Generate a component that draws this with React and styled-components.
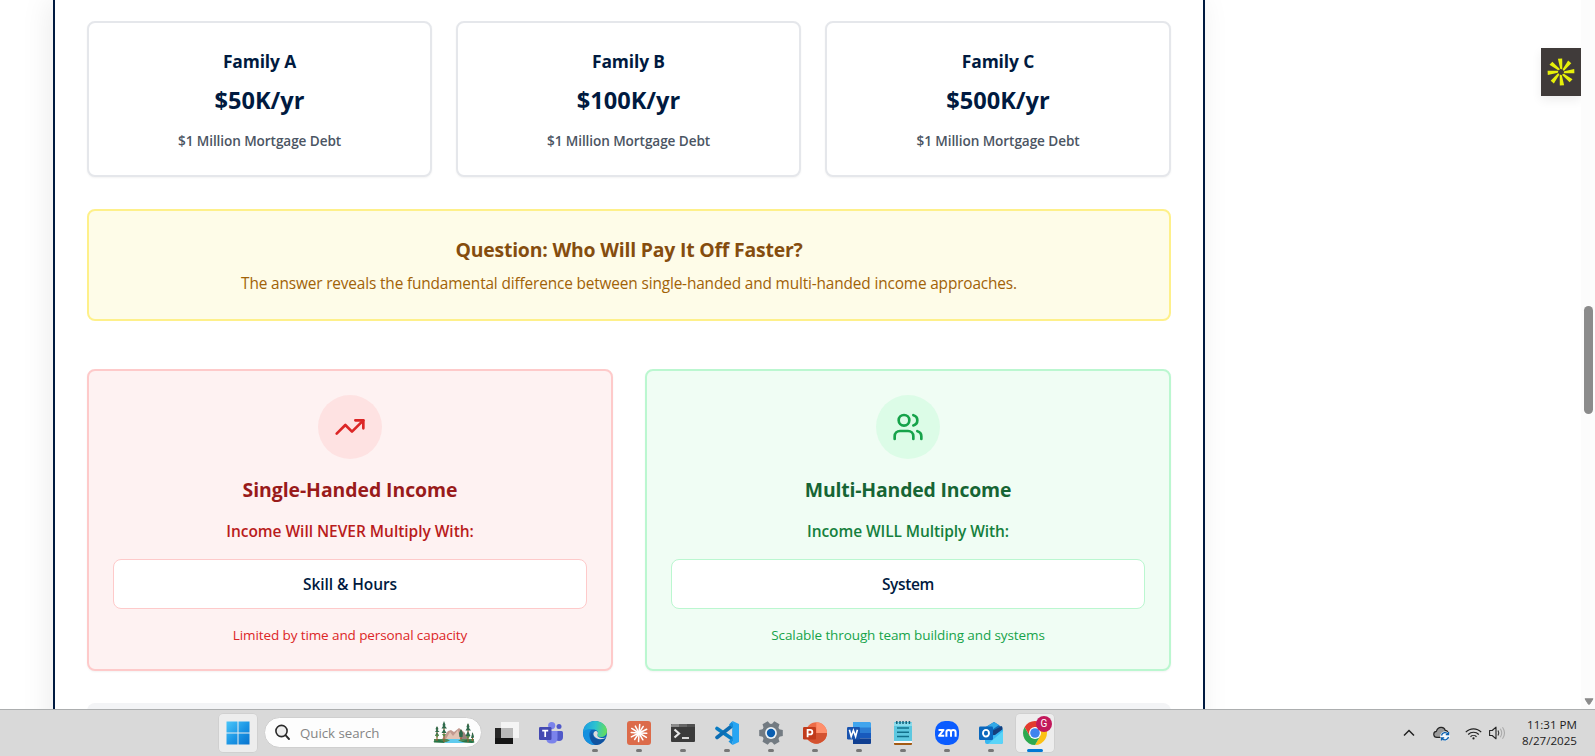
import React from "react";
import styled, { createGlobalStyle } from "styled-components";
import { TrendingUp, Users } from "lucide-react";

const GlobalStyle = createGlobalStyle`
  *, *::before, *::after { box-sizing: border-box; }
  body { margin: 0; overflow: hidden; background: #fff; font-family: "Segoe UI", "Open Sans", "Noto Sans", sans-serif; }
  h3, h4, p { margin: 0; }
  svg { display: block; }
`;

const tones = {
  red: { bg: "#fef2f2", border: "#fecaca", disc: "#fee2e2", icon: "#dc2626", title: "#991b1b", sub: "#b91c1c", note: "#dc2626" },
  green: { bg: "#f0fdf4", border: "#bbf7d0", disc: "#dcfce7", icon: "#16a34a", title: "#166534", sub: "#15803d", note: "#16a34a" },
};

const Screen = styled.div`
  height: 756px;
  display: flex;
  flex-direction: column;
`;

const Viewport = styled.div`
  height: 709px;
  display: flex;
  overflow: hidden;
`;

const Page = styled.main`
  flex: 1;
  position: relative;
  overflow: hidden;
  padding-left: 53px;
`;

const Sheet = styled.section`
  width: 1152px;
  height: 900px;
  padding: 21px 32px 0;
  border: solid #001a40;
  border-width: 0 2px;
  background: #fff;
  box-shadow: -4px 0 28px rgba(0, 0, 0, 0.08);
`;

const Families = styled.div`
  display: grid;
  grid-template-columns: 345px 345px 1fr;
  gap: 24px;
  margin-bottom: 32px;
`;

const FamilyCard = styled.article`
  height: 156px;
  padding: 24px;
  border: 2px solid #e5e7eb;
  border-radius: 8px;
  background: #fff;
  box-shadow: 0 1px 2px rgba(0, 0, 0, 0.05);
  text-align: center;
`;

const FamilyName = styled.h4`
  margin-bottom: 9px;
  font-size: 17.4px;
  line-height: 28px;
  font-weight: 700;
  letter-spacing: -0.12px;
  color: #001a40;
`;

const Income = styled.p`
  margin-bottom: 15px;
  font-size: 23.6px;
  line-height: 32px;
  font-weight: 700;
  color: #001a40;
`;

const Debt = styled.p`
  font-size: 13.6px;
  line-height: 20px;
  font-weight: 600;
  letter-spacing: -0.09px;
  color: #4b5563;
`;

const Question = styled.div`
  height: 112px;
  margin-bottom: 48px;
  padding: 25px 24px 23px;
  border: 2px solid #fef08a;
  border-radius: 8px;
  background: #fefce8;
  text-align: center;
`;

const QuestionTitle = styled.h3`
  margin-bottom: 8px;
  font-size: 19.4px;
  line-height: 28px;
  font-weight: 700;
  letter-spacing: -0.19px;
  color: #854d0e;
`;

const QuestionText = styled.p`
  font-size: 15.4px;
  line-height: 24px;
  letter-spacing: -0.15px;
  color: #a16207;
`;

const Comparison = styled.div`
  display: grid;
  grid-template-columns: repeat(2, 1fr);
  gap: 32px;
  margin-bottom: 32px;
`;

const Panel = styled.article`
  height: 302px;
  padding: 24px;
  border: 2px solid ${(p) => tones[p.$tone].border};
  border-radius: 8px;
  background: ${(p) => tones[p.$tone].bg};
  box-shadow: 0 1px 2px rgba(0, 0, 0, 0.05);
  text-align: center;
`;

const IconDisc = styled.div`
  display: flex;
  align-items: center;
  justify-content: center;
  width: 64px;
  height: 64px;
  margin: 0 auto 17px;
  border-radius: 50%;
  background: ${(p) => tones[p.$tone].disc};
  color: ${(p) => tones[p.$tone].icon};
`;

const PanelTitle = styled.h3`
  margin-bottom: 15px;
  font-size: 19.4px;
  line-height: 28px;
  font-weight: 700;
  letter-spacing: ${(p) => p.$tracking || 0}px;
  color: ${(p) => tones[p.$tone].title};
`;

const PanelSub = styled.p`
  margin-bottom: 16px;
  font-size: 15.5px;
  line-height: 24px;
  font-weight: 600;
  letter-spacing: ${(p) => p.$tracking || 0}px;
  color: ${(p) => tones[p.$tone].sub};
`;

const Factor = styled.div`
  height: 50px;
  margin-bottom: 16px;
  padding: 12px;
  border: 1px solid ${(p) => tones[p.$tone].border};
  border-radius: 8px;
  background: #fff;
  font-size: 15.5px;
  line-height: 24px;
  font-weight: 600;
  letter-spacing: ${(p) => p.$tracking || 0}px;
  color: #001a40;
`;

const PanelNote = styled.p`
  font-size: 13.5px;
  line-height: 20px;
  letter-spacing: -0.1px;
  color: ${(p) => tones[p.$tone].note};
`;

const NextBlock = styled.div`
  height: 160px;
  border-radius: 8px;
  background: #f3f4f6;
`;

const SideWidget = styled.div`
  position: absolute;
  top: 48px;
  right: 0;
  display: flex;
  align-items: center;
  justify-content: center;
  width: 40px;
  height: 48px;
  background: #403b3a;
  box-shadow: 0 4px 10px rgba(0, 0, 0, 0.07);
`;

const Scrollbar = styled.div`
  display: flex;
  flex-direction: column;
  justify-content: space-between;
  align-items: flex-start;
  width: 14px;
  padding: 306px 0 4px 3px;
  background: #fcfcfc;
`;

const Thumb = styled.div`
  width: 9px;
  height: 108px;
  border-radius: 5px;
  background: #8b8b8b;
`;

const Taskbar = styled.footer`
  display: flex;
  align-items: flex-start;
  height: 47px;
  padding: 4px 18px 0 219px;
  border-top: 1px solid #acaeaf;
  background: #d9d9d9;
`;

const Tile = styled.div`
  display: flex;
  align-items: center;
  justify-content: center;
  width: 38px;
  height: 38px;
  border-radius: 4px;
  background: #ededed;
  box-shadow: 0 0 0 0.5px #c8c8c8;
`;

const SearchBox = styled.div`
  display: flex;
  align-items: center;
  width: 218px;
  height: 31px;
  margin: 3px 3px 0 7px;
  padding: 0 6px 0 9px;
  border: 1px solid #cfcfcf;
  border-radius: 16px;
  background: #fdfdfd;
`;

const SearchLabel = styled.span`
  flex: 1;
  margin-left: 9px;
  font-size: 13.3px;
  letter-spacing: -0.04px;
  color: #858585;
`;

const Slot = styled.div`
  position: relative;
  display: flex;
  align-items: center;
  justify-content: center;
  width: 44px;
  height: 38px;

  &::after {
    content: "";
    position: absolute;
    bottom: 0;
    width: ${(p) => (p.$state === "active" ? 16 : 6)}px;
    height: 3px;
    border-radius: 2px;
    background: ${(p) => (p.$state === "active" ? "#0078d4" : "#777")};
    display: ${(p) => (p.$state ? "block" : "none")};
  }
`;

const Badge = styled.span`
  position: absolute;
  top: 2px;
  right: 5px;
  width: 16px;
  height: 16px;
  border-radius: 50%;
  background: #c2185b;
  color: #fff;
  font: 10px/16px Roboto, sans-serif;
  text-align: center;
`;

const Tray = styled.div`
  display: flex;
  align-items: center;
  height: 38px;
  margin-left: auto;
`;

const TrayIcon = styled.div`
  margin-right: ${(p) => p.$gap}px;
`;

const Clock = styled.div`
  width: 60px;
  text-align: right;
  white-space: nowrap;
  font-size: 11.6px;
  line-height: 16px;
  color: #1c1c1c;
`;

const RAYS = [0, 45, 90, 135, 180, 225, 270, 315];

const BurstIcon = () => (
  <svg width="28" height="28" viewBox="-14 -14 28 28" fill="#e6f00a">
    {RAYS.map((a) => (
      <path key={a} d="M-3.1 -13.2 L1.2 -13.4 L1.3 -2.6 L-0.8 -3.2 Z" transform={`rotate(${a})`} />
    ))}
  </svg>
);

const StartIcon = () => (
  <svg width="24" height="24" viewBox="0 0 24 24">
    <defs>
      <linearGradient id="win" x1="0" y1="0" x2="24" y2="24" gradientUnits="userSpaceOnUse">
        <stop offset="0" stopColor="#4cc8fa" />
        <stop offset="0.55" stopColor="#1a94e4" />
        <stop offset="1" stopColor="#0871cc" />
      </linearGradient>
    </defs>
    <path fill="url(#win)" d="M.5.5h11v11H.5zM12.500.5h11v11h-11zM.5 12.500h11v11H.5zM12.500 12.500h11v11h-11z" />
  </svg>
);

const SearchIcon = () => (
  <svg width="17" height="17" viewBox="0 0 17 17" fill="none" stroke="#2a2a2a" strokeLinecap="round">
    <circle cx="7.500" cy="7" r="5.600" strokeWidth="1.600" fill="#eee" />
    <path d="M11.500 11.200l3.500 3.800" strokeWidth="1.900" />
  </svg>
);

const Scenery = () => (
  <svg width="42" height="24" viewBox="0 0 42 24">
    <path fill="#c39a90" d="M9 18 15 10l3-1 3 2 5-4 5 4 4 7z" />
    <path fill="#e2c4b5" d="M13 18l4-7 3 4 5-6 2 9z" />
    <path fill="#9a817b" d="M27 18l4-7 4 7z" />
    <path fill="#4f8a58" d="M1 18h40v3.500H1z" />
    <path fill="#257447" d="M0 21l5-2.500 5 1.500 2 2zM28 21l6-2.500 8 2.500-3 1z" />
    <path fill="#5fcbee" d="M14 18h15l-4 1.500 7 2.500H11l6-2.500z" />
    <path stroke="#9a5c2e" strokeWidth="1.100" d="M4 6v14M11 3v18M28 9v10M35 3v18M39.500 12v8" />
    <path fill="#2f6a4b" d="M4 5l1.500 3L4.500 9l2 2H2l1.500-2-1-1zM4 11l2 4H2zM11 0l1.500 4-.5 1 2 2.500H8.500L10 5l-.5-1zM11 8l2.500 4h-5zM28 8l2 4-.5 4h-3L26 12zM35 2l1.500 3.500L36 7l2 2.500h-5.500L34 7l-.5-1.500zM35 10l2.500 5h-5zM39.500 11l1.500 4.500-.5 1.500H38z" />
    <path fill="#5b8b45" d="M2.500 13.500h3.500L4 17zM9 13h4l-2 3zM33 15h4l-2 3z" />
  </svg>
);

const TaskViewIcon = () => (
  <svg width="24" height="24" viewBox="0 0 24 24">
    <path fill="#272727" d="M0 7h18v16H0z" />
    <path fill="#151515" d="M0 17h18v6H0z" />
    <path fill="#f4f4f4" d="M6 1h18v16H6z" />
    <path fill="#b9b9b9" d="M6 7h12v10H6z" />
  </svg>
);

const TeamsIcon = () => (
  <svg width="24" height="24" viewBox="0 0 24 24">
    <circle cx="20" cy="5.600" r="2.500" fill="#5059c9" />
    <path fill="#5059c9" d="M16 10h6.500q1.500 0 1.500 1.500V16q0 4-4 4t-4-3z" />
    <circle cx="12.700" cy="4.600" r="3.600" fill="#7b83eb" />
    <path fill="#7b83eb" d="M7 10h11.500v7q0 5.500-5.700 5.500T7 17z" />
    <rect y="6" width="12.500" height="13" rx="1.200" fill="#4449b2" />
    <path fill="none" stroke="#fff" strokeWidth="1.700" d="M3.200 9.600h6M6.200 9.600v6.500" />
  </svg>
);

const EdgeIcon = () => (
  <svg width="24" height="24" viewBox="0 0 24 24">
    <defs>
      <linearGradient id="edgeTop" x1="0" y1="6" x2="24" y2="10" gradientUnits="userSpaceOnUse">
        <stop offset="0" stopColor="#1b9de2" />
        <stop offset="0.5" stopColor="#2cc3cf" />
        <stop offset="1" stopColor="#68df55" />
      </linearGradient>
    </defs>
    <circle cx="12" cy="12" r="12" fill="#0c63b8" />
    <path fill="url(#edgeTop)" d="M0 12C0 4 6 0 12 0s12 4 12 10c0 4-3 6-6 6-3 0-4.500-1.300-3.500-2.800C16 11 14 8.500 10 8.500 5 8.500 1 10 0 12z" />
    <path fill="#1490df" d="M0 12c1-3 5-4.500 9-3.200-4 1.200-4 10.200 3 15.200C5 24 0 18.600 0 12z" />
    <path fill="#10529f" d="M9.500 11c-1 6 5 9.500 13 6.500C20 22 16.500 24 12.500 24 7 21 5.500 14 9.500 11z" />
    <path fill="#dcdcdc" d="M14.500 13.200C15.500 12 14.500 9.800 12.500 10c-2 .4-2.700 3-1.500 5 2 3.500 8.500 4.500 12.500 1-3 2-10.500.8-9-2.800z" />
  </svg>
);

const ClaudeIcon = () => (
  <svg width="24" height="24" viewBox="0 0 24 24">
    <rect width="24" height="24" rx="3" fill="#dc6b4a" />
    <g stroke="#fff" strokeWidth="1.500" strokeLinecap="round">
      {[5, 33, 64, 92, 121, 150, 183, 214, 243, 273, 302, 332].map((a, i) => (
        <path key={a} d={`M12 12V${i % 2 ? 4.2 : 3.4}`} transform={`rotate(${a} 12 12)`} />
      ))}
    </g>
  </svg>
);

const TerminalIcon = () => (
  <svg width="24" height="24" viewBox="0 0 24 24">
    <rect y="3" width="24" height="18" rx="1" fill="#3b3b3b" />
    <path fill="#8c8c8c" d="M1 3h7v3H0V4z" />
    <path fill="#666" d="M8 3h8v3H8z" />
    <path fill="#505050" d="M16 3h7l1 1v2h-8z" />
    <path fill="none" stroke="#e8e8e8" strokeWidth="2.200" d="M3.500 8.500l4.500 4-4.500 4" />
    <path stroke="#fff" strokeWidth="1.600" d="M11 17h7" />
  </svg>
);

const VsCodeIcon = () => (
  <svg width="24" height="24" viewBox="0 0 24 24">
    <path fill="none" stroke="#087bc2" strokeWidth="3.600" strokeLinecap="round" d="M18 18.500L2 7.500" />
    <path fill="none" stroke="#0c6db3" strokeWidth="3.600" strokeLinecap="round" d="M2 16.500L18 4" />
    <path fill="#27a5f3" d="M17.500 0L24 3v18l-6.500 3z" />
    <path fill="#1490df" d="M17.500 0v24l-4-3.500 4.500-4V7.500l-4-4z" />
  </svg>
);

const SettingsIcon = () => (
  <svg width="24" height="24" viewBox="-12 -12 24 24">
    <g fill="#737b82">
      <circle r="9.200" />
      {[30, 90, 150, 210, 270, 330].map((a) => (
        <path key={a} d="M-4 -7L-3 -11.800H3L4 -7z" transform={`rotate(${a})`} />
      ))}
    </g>
    <circle r="5.900" fill="#eef3f6" />
    <circle r="4.200" fill="#0a5eb0" />
  </svg>
);

const PowerPointIcon = () => (
  <svg width="24" height="24" viewBox="0 0 24 24">
    <circle cx="13.300" cy="12" r="10.700" fill="#ed6c47" />
    <path fill="#ff8f6b" d="M13.300 1.300A10.700 10.700 0 0 1 24 12H13.300z" />
    <path fill="#d35230" d="M2.600 12H24a10.700 10.700 0 0 1-21.400 0z" />
    <rect y="6" width="13" height="12.500" rx="1.200" fill="#c13b1b" />
    <path fill="none" stroke="#fff" strokeWidth="1.800" d="M4.600 16.200V8.900h2.500a2.200 2.200 0 0 1 0 4.500H4.600" />
  </svg>
);

const WordIcon = () => (
  <svg width="24" height="24" viewBox="0 0 24 24">
    <path fill="#41a5ee" d="M6 1h17l1 1v5H6z" />
    <path fill="#2b7cd3" d="M6 6.500h18V12H6z" />
    <path fill="#185abd" d="M6 12h18v5.500H6z" />
    <path fill="#103f91" d="M6 17.500h18v5l-1 .5H6z" />
    <rect y="6" width="13" height="12.500" rx="1.200" fill="#1953ae" />
    <path fill="none" stroke="#fff" strokeWidth="1.600" d="M2.400 8.800l1.800 6.700 2.200-6.200 2.200 6.200 1.800-6.700" />
  </svg>
);

const NotepadIcon = () => (
  <svg width="24" height="24" viewBox="0 0 24 24">
    <rect x="3" y="1" width="18" height="20" rx="1.200" fill="#5dc8e0" />
    <path fill="#8bdcec" d="M3 2h18v3H3z" />
    <path stroke="#146079" strokeWidth="1.500" d="M5.800 0v3M9 0v3M12 0v3M15.200 0v3M18.400 0v3" />
    <path stroke="#12718c" strokeWidth="1.500" d="M6 7h12M6 11.200h12M6 15.400h12" />
    <path fill="#f7f7f7" d="M3 20h18v2H3z" />
    <path fill="#a35a12" d="M3 22h18v1q0 1-1 1H4q-1 0-1-1z" />
  </svg>
);

const ZoomIcon = () => (
  <svg width="24" height="24" viewBox="0 0 24 24">
    <rect width="24" height="24" rx="10" fill="#0b5cff" />
    <g fill="none" stroke="#fff" strokeWidth="2" strokeLinejoin="round">
      <path d="M3.500 9h5L4 14.800h5.200" />
      <path d="M11.400 15.800v-4.500q0-2.300 2.300-2.300t2.300 2.300v4.500M16 11.300q0-2.300 2.300-2.300t2.300 2.300v4.500" />
    </g>
  </svg>
);

const OutlookIcon = () => (
  <svg width="24" height="24" viewBox="0 0 24 24">
    <path fill="#1066b5" d="M6 6.500L15 1l8.500 5.500V15H6z" />
    <path fill="#32a9e7" d="M8 5.500L15 1l5 3-10 7z" />
    <path fill="#153f7c" d="M11 11l12-6 .5 5-8 5z" />
    <path fill="#35b7f1" d="M6 15l10-1 8-6v13q0 2-2 2H8q-2 0-2-2z" />
    <path fill="#59d4f8" d="M24 10v11q0 2-2 2H9z" />
    <rect y="5.500" width="14" height="13.500" rx="1.200" fill="#0a67bd" />
    <ellipse cx="7" cy="12.200" rx="3" ry="3.300" fill="none" stroke="#fff" strokeWidth="1.900" />
  </svg>
);

const ChromeIcon = () => (
  <svg width="24" height="24" viewBox="-12 -12 24 24">
    <path fill="#e33b2e" d="M-10.390 -6A12 12 0 0 1 10.390 -6H0z" />
    <path fill="#fbc116" d="M10.390 -6A12 12 0 0 1 0 12L5.200 3 0 -6z" />
    <path fill="#2da94f" d="M0 12A12 12 0 0 1 -10.390 -6L-5.200 3H5.200z" />
    <path fill="#e33b2e" d="M-10.390 -6L-5.200 3L0 -6z" />
    <circle r="6" fill="#fff" />
    <circle r="4.800" fill="#3f83ee" />
  </svg>
);

const ChevronIcon = () => (
  <svg width="12" height="8" viewBox="0 0 12 8" fill="none" stroke="#222" strokeWidth="1.500">
    <path d="M1 6.500l5-5 5 5" />
  </svg>
);

const CloudSyncIcon = () => (
  <svg width="17" height="15" viewBox="0 0 17 15">
    <path fill="#9b9b9b" stroke="#252525" strokeWidth="1.200" d="M4 11.400C-.2 11.400-.2 5.600 3.400 5.300 4.800.2 11.300.1 12.200 4.400c2.600 0 4 3.200 2.300 5.400L9 11.400z" />
    <circle cx="12" cy="10.200" r="4.800" fill="#f4f8fc" />
    <path fill="none" stroke="#0a5fae" strokeWidth="1.300" d="M8.500 9.500a3.600 3.600 0 0 1 6.500-1.300M15.500 6v2.700h-2.700M15.500 11a3.600 3.600 0 0 1-6.500 1.300M8.500 14.500v-2.700h2.700" />
  </svg>
);

const WifiIcon = () => (
  <svg width="17" height="13" viewBox="0 0 17 13" fill="none" stroke="#222" strokeWidth="1.200">
    <path d="M.8 5.200a10.600 10.600 0 0 1 15.400 0M3.200 7.500a7.400 7.400 0 0 1 10.600 0M5.500 9.700a4.300 4.300 0 0 1 6 0" />
    <circle cx="8.500" cy="11.400" r="1.100" fill="#222" stroke="none" />
  </svg>
);

const VolumeIcon = () => (
  <svg width="17" height="14" viewBox="0 0 17 14" fill="none" strokeWidth="1.100">
    <path stroke="#222" strokeLinejoin="round" d="M.6 4.500h2.600L7 1.200v11.600L3.200 9.500H.6z" />
    <path stroke="#333" d="M9 4.500q1.600 2.500 0 5" />
    <path stroke="#aaa" d="M11.300 2.800q2.800 4.200 0 8.400M13.500 1.300q4 5.700 0 11.400" />
  </svg>
);

const families = [
  ["Family A", "$50K/yr"],
  ["Family B", "$100K/yr"],
  ["Family C", "$500K/yr"],
];

const approaches = [
  { tone: "red", Icon: TrendingUp, title: "Single-Handed Income", titleTracking: -0.05, sub: "Income Will NEVER Multiply With:", subTracking: -0.03, factor: "Skill & Hours", factorTracking: -0.08, note: "Limited by time and personal capacity" },
  { tone: "green", Icon: Users, title: "Multi-Handed Income", titleTracking: -0.16, sub: "Income WILL Multiply With:", subTracking: -0.09, factor: "System", factorTracking: -0.35, note: "Scalable through team building and systems" },
];

const apps = [
  [TaskViewIcon, ""],
  [TeamsIcon, ""],
  [EdgeIcon, "open"],
  [ClaudeIcon, "open"],
  [TerminalIcon, "open"],
  [VsCodeIcon, "open"],
  [SettingsIcon, "open"],
  [PowerPointIcon, "open"],
  [WordIcon, "open"],
  [NotepadIcon, "open"],
  [ZoomIcon, "open"],
  [OutlookIcon, "open"],
];

export default function App() {
  return (
    <Screen>
      <GlobalStyle />
      <Viewport>
        <Page>
          <Sheet>
            <Families>
              {families.map(([name, income]) => (
                <FamilyCard key={name}>
                  <FamilyName>{name}</FamilyName>
                  <Income>{income}</Income>
                  <Debt>$1 Million Mortgage Debt</Debt>
                </FamilyCard>
              ))}
            </Families>
            <Question>
              <QuestionTitle>Question: Who Will Pay It Off Faster?</QuestionTitle>
              <QuestionText>
                The answer reveals the fundamental difference between single-handed and multi-handed income approaches.
              </QuestionText>
            </Question>
            <Comparison>
              {approaches.map(({ tone, Icon, ...a }) => (
                <Panel key={tone} $tone={tone}>
                  <IconDisc $tone={tone}>
                    <Icon size={32} />
                  </IconDisc>
                  <PanelTitle $tone={tone} $tracking={a.titleTracking}>{a.title}</PanelTitle>
                  <PanelSub $tone={tone} $tracking={a.subTracking}>{a.sub}</PanelSub>
                  <Factor $tone={tone} $tracking={a.factorTracking}>{a.factor}</Factor>
                  <PanelNote $tone={tone}>{a.note}</PanelNote>
                </Panel>
              ))}
            </Comparison>
            <NextBlock />
          </Sheet>
          <SideWidget>
            <BurstIcon />
          </SideWidget>
        </Page>
        <Scrollbar>
          <Thumb />
          <svg width="10" height="7" viewBox="0 0 10 7">
            <path fill="#8b8b8b" stroke="#8b8b8b" strokeLinejoin="round" d="M1 .8h8L5.600 6.200H4.400z" />
          </svg>
        </Scrollbar>
      </Viewport>
      <Taskbar>
        <Tile>
          <StartIcon />
        </Tile>
        <SearchBox>
          <SearchIcon />
          <SearchLabel>Quick search</SearchLabel>
          <Scenery />
        </SearchBox>
        {apps.map(([Icon, state], i) => (
          <Slot key={i} $state={state}>
            <Icon />
          </Slot>
        ))}
        <Slot $state="active">
          <Tile>
            <ChromeIcon />
          </Tile>
          <Badge>G</Badge>
        </Slot>
        <Tray>
          <TrayIcon $gap={18}>
            <ChevronIcon />
          </TrayIcon>
          <TrayIcon $gap={15}>
            <CloudSyncIcon />
          </TrayIcon>
          <TrayIcon $gap={7}>
            <WifiIcon />
          </TrayIcon>
          <TrayIcon $gap={11}>
            <VolumeIcon />
          </TrayIcon>
          <Clock>
            <div>11:31 PM</div>
            <div>8/27/2025</div>
          </Clock>
        </Tray>
      </Taskbar>
    </Screen>
  );
}
